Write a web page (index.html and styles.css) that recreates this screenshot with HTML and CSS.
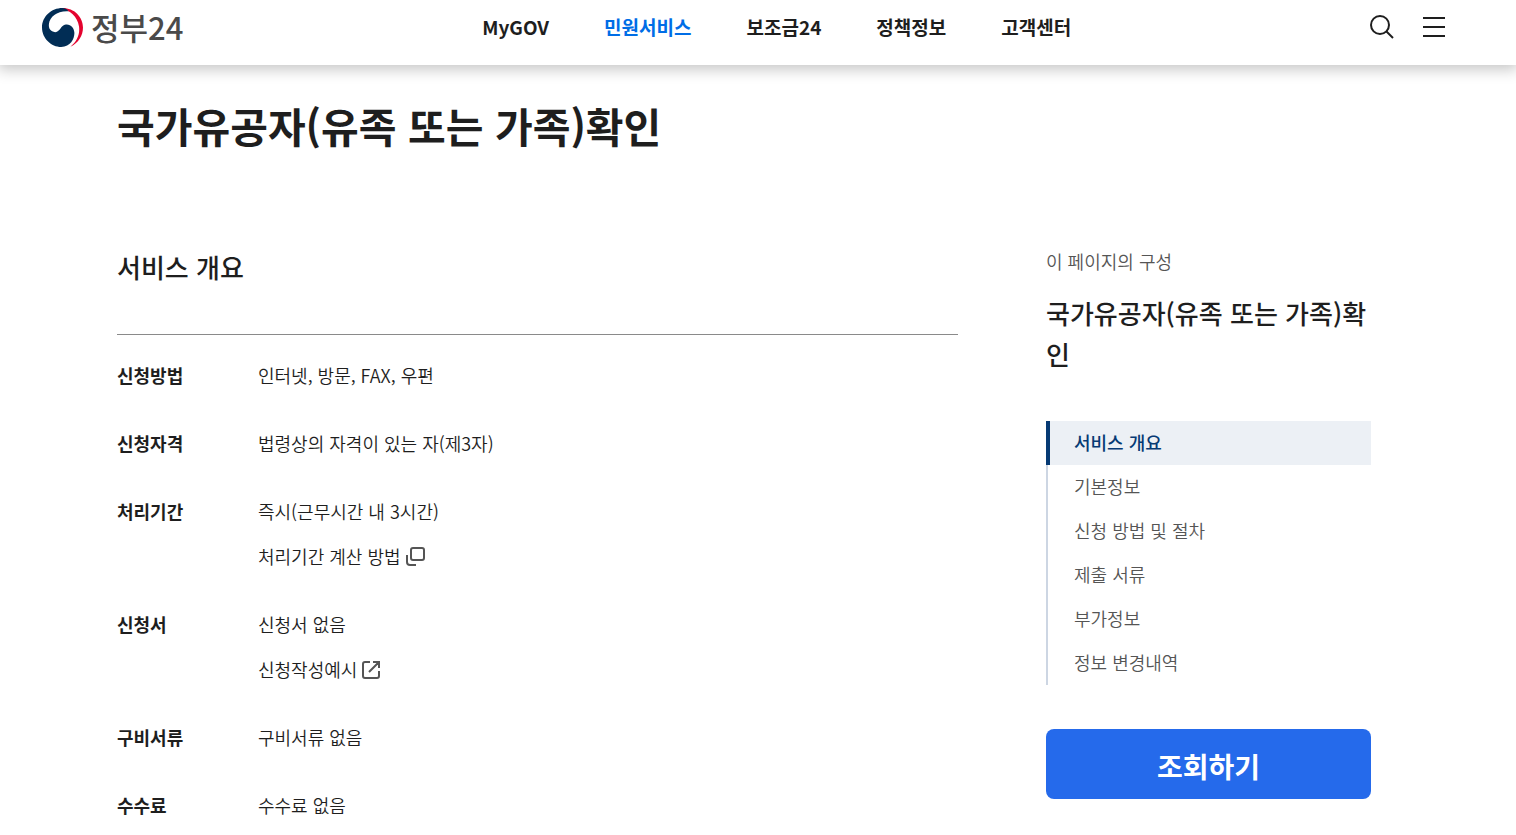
FILE: index.html
```html
<!DOCTYPE html>
<html lang="ko">
<head>
    <meta charset="UTF-8">
    <meta name="viewport" content="width=device-width, initial-scale=1.0">
    <title>국가유공자(유족 또는 가족)확인 | 정부24</title>
    <link rel="stylesheet" href="styles.css">
</head>
<body>
    <header class="header">
        <a href="#" class="logo">
            <svg class="logo-mark" viewBox="12 12 124 118" aria-hidden="true">
                <path fill="#e4032e" d="M64 13 C104 7 136 36 136 71 C136 96 122 118 98 129 C118 112 127 92 124 68 C119 38 98 18 64 13Z"/>
                <path fill="#012d55" d="M74 12 C40 12 12 38 12 71 C12 104 40 130 70 130 C98 130 110 106 110 88 C110 72 98 60 84 62 C68 64 68 84 52 85 C38 85 31 74 33 60 C36 38 58 20 92 22 C88 15 80 12 74 12Z"/>
            </svg>
            <span>정부24</span>
        </a>
        <nav class="gnb">
            <a href="#">MyGOV</a>
            <a href="#" class="active">민원서비스</a>
            <a href="#">보조금24</a>
            <a href="#">정책정보</a>
            <a href="#">고객센터</a>
        </nav>
        <div class="tools">
            <button type="button" aria-label="검색">
                <svg viewBox="0 0 24 24"><circle cx="10" cy="10" r="9"/><path d="M16.5 16.5 L23 23"/></svg>
            </button>
            <button type="button" aria-label="전체메뉴">
                <svg viewBox="0 0 24 24"><path d="M1 3h22M1 12h22M1 21h22"/></svg>
            </button>
        </div>
    </header>

    <main class="container">
        <h1>국가유공자(유족 또는 가족)확인</h1>
        <div class="columns">
            <section class="overview">
                <h2>서비스 개요</h2>
                <dl class="info">
                    <div class="row">
                        <dt>신청방법</dt>
                        <dd>인터넷, 방문, FAX, 우편</dd>
                    </div>
                    <div class="row">
                        <dt>신청자격</dt>
                        <dd>법령상의 자격이 있는 자(제3자)</dd>
                    </div>
                    <div class="row">
                        <dt>처리기간</dt>
                        <dd>
                            즉시(근무시간 내 3시간)
                            <a href="#" class="more">처리기간 계산 방법
                                <svg viewBox="0 0 20 20"><rect x="6" y="2" width="13" height="12" rx="2"/><path d="M2 9v7q0 3 3 3h6"/></svg>
                            </a>
                        </dd>
                    </div>
                    <div class="row">
                        <dt>신청서</dt>
                        <dd>
                            신청서 없음
                            <a href="#" class="more">신청작성예시
                                <svg viewBox="0 0 20 20"><path d="M9 3H4Q2 3 2 5v12q0 2 2 2h12q2 0 2-2v-5M12 3h6v6M18 3L8 13"/></svg>
                            </a>
                        </dd>
                    </div>
                    <div class="row">
                        <dt>구비서류</dt>
                        <dd>구비서류 없음</dd>
                    </div>
                    <div class="row">
                        <dt>수수료</dt>
                        <dd>수수료 없음</dd>
                    </div>
                </dl>
            </section>

            <aside class="side">
                <p class="side-label">이 페이지의 구성</p>
                <p class="side-title">국가유공자(유족 또는 가족)확인</p>
                <ul class="side-nav">
                    <li><a href="#" class="active">서비스 개요</a></li>
                    <li><a href="#">기본정보</a></li>
                    <li><a href="#">신청 방법 및 절차</a></li>
                    <li><a href="#">제출 서류</a></li>
                    <li><a href="#">부가정보</a></li>
                    <li><a href="#">정보 변경내역</a></li>
                </ul>
                <button type="button" class="btn-search">조회하기</button>
            </aside>
        </div>
    </main>
</body>
</html>
```
FILE: styles.css
```css
:root {
    --primary: #256aeb;
    --link-active: #006de6;
    --navy: #063a74;
    --text-dark: #1e1e1e;
    --text-medium: #555;
    --line: #8a8a8a;
}

* {
    box-sizing: border-box;
    margin: 0;
    padding: 0;
}

body {
    font-family: "Noto Sans CJK KR", sans-serif;
    font-size: 18px;
    font-weight: 350;
    line-height: 28px;
    color: var(--text-dark);
    background: #fff;
}

a {
    color: inherit;
    text-decoration: none;
}

button {
    border: none;
    background: none;
    cursor: pointer;
}

/* Header */
.header {
    display: flex;
    justify-content: space-between;
    align-items: center;
    height: 65px;
    padding: 0 70px 11px 42px;
    box-shadow: 0 2px 14px 2px rgba(0, 0, 0, 0.24);
}

.logo {
    display: flex;
    align-items: center;
    gap: 8px;
    font-size: 31px;
    font-weight: 500;
    color: #4a4a4a;
}

.logo-mark {
    width: 41px;
    height: 39px;
}

.gnb {
    display: flex;
    gap: 55px;
    font-size: 19px;
    font-weight: 700;
}

.gnb .active {
    color: var(--link-active);
}

.tools {
    display: flex;
    gap: 28px;
}

.tools svg {
    display: block;
    width: 24px;
    height: 24px;
    fill: none;
    stroke: var(--text-dark);
    stroke-width: 2;
}

/* Content */
.container {
    padding: 29px 145px 0 117px;
}

h1 {
    margin-bottom: 91px;
    font-size: 41px;
    font-weight: 700;
    line-height: 62px;
}

.columns {
    display: flex;
    align-items: flex-start;
    gap: 88px;
}

.overview {
    flex: 1;
}

h2 {
    padding-bottom: 47px;
    border-bottom: 1px solid var(--line);
    font-size: 26px;
    font-weight: 500;
    line-height: 40px;
}

.info {
    display: flex;
    flex-direction: column;
    gap: 40px;
    padding-top: 26px;
}

.row {
    display: flex;
}

dt {
    width: 141px;
    font-weight: 700;
}

.more {
    display: flex;
    align-items: center;
    gap: 4px;
    margin-top: 17px;
}

.more svg {
    width: 20px;
    height: 20px;
    fill: none;
    stroke: var(--text-medium);
    stroke-width: 2;
}

/* Side navigation */
.side {
    width: 325px;
}

.side-label {
    margin-bottom: 17px;
    color: var(--text-medium);
}

.side-title {
    margin-bottom: 47px;
    font-size: 26px;
    font-weight: 500;
    line-height: 41px;
}

.side-nav {
    margin-bottom: 44px;
    list-style: none;
}

.side-nav a {
    display: block;
    padding: 7px 0 9px 26px;
    border-left: 2px solid #cdd6e3;
    color: var(--text-medium);
}

.side-nav .active {
    padding-left: 24px;
    border-left: 4px solid var(--navy);
    background: #ecf0f5;
    color: var(--navy);
    font-weight: 500;
}

.btn-search {
    width: 100%;
    height: 70px;
    padding-top: 4px;
    border-radius: 8px;
    background: var(--primary);
    color: #fff;
    font-family: inherit;
    font-size: 28px;
    font-weight: 700;
}
```
